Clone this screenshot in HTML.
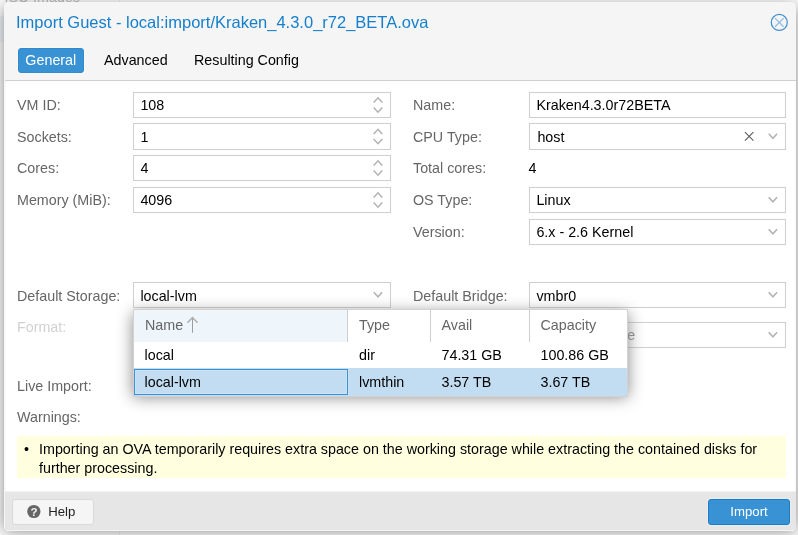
<!DOCTYPE html>
<html>
<head>
<meta charset="utf-8">
<title>Import Guest</title>
<style>
html,body{margin:0;padding:0;}
body{width:798px;height:535px;overflow:hidden;position:relative;background:#fbfbfb;font-family:"Liberation Sans",Arial,Helvetica,sans-serif;font-size:14.3px;color:#000;}
#root{position:absolute;left:0;top:0;width:798px;height:535px;overflow:hidden;will-change:transform;}
.abs{position:absolute;}
.bgtxt{left:4.5px;top:-11px;font-size:14.3px;line-height:16px;color:#b2b2b2;white-space:nowrap;}
.bgstripe{left:0;top:15.7px;width:119px;height:26px;background:#ecf2f8;}
.bgline{left:119px;top:0;width:1px;height:535px;background:#ececec;}
#winsh{left:4px;top:6.4px;width:792px;height:524.6px;border-radius:4.5px;box-shadow:0 0 15px #888;}
#win{left:4px;top:2px;width:792px;height:529px;background:#f5f5f5;border-radius:4.5px;}
#title{left:16px;top:12px;font-size:16.5px;line-height:20px;color:#157fcc;white-space:nowrap;}
.tab{top:48px;height:24.5px;line-height:25.5px;font-size:14.3px;white-space:nowrap;}
#tabGeneral{left:18px;width:66px;height:25px;line-height:23.5px;background:#3892d4;border:1px solid #2f8ad0;color:#fff;border-radius:3px;text-align:center;padding-right:0.4px;box-sizing:border-box;box-shadow:0 0 0 1px #fbf7f3;}
#tabline{left:5px;top:80px;width:791px;height:1px;background:#cfcfcf;}
#bodyp{left:5px;top:81px;width:791px;height:410px;background:#fff;border-left:1px solid #fafafa;border-right:1px solid #fafafa;box-sizing:border-box;}
#footer{left:5px;top:491px;width:791px;height:39px;background:#e6e6e6;border-top:1px solid #f2f2f2;box-sizing:border-box;}
.lbl{color:#666;font-size:14.3px;line-height:26px;height:26px;white-space:nowrap;}
.lbl.dis{color:#d1d1d1;}
.fld{box-sizing:border-box;border:1px solid #cfcfcf;background:#fff;}
.ft{font-size:14.3px;line-height:26px;height:26px;white-space:nowrap;color:#000;}
.btn{box-sizing:border-box;border-radius:3px;font-size:13.2px;white-space:nowrap;}
#help{left:12px;top:499px;width:82px;height:26px;background:#f5f5f5;border:1px solid #d9d9d9;color:#222;}
#import{left:708px;top:499px;width:82px;height:26px;background:#3892d4;border:1px solid #157fcc;color:#fff;text-align:center;line-height:24px;box-shadow:0 0 0 1px #f1ebe7;}
#warn{left:17px;top:436px;width:769px;height:42px;background:#ffffe0;}
#warn .t{position:absolute;left:22px;top:3.8px;font-size:14.3px;line-height:19px;white-space:nowrap;color:#000;}
#ddsh{left:133px;top:313.4px;width:495px;height:83.6px;box-shadow:0 0 15px #888;}
#dd{left:133px;top:309px;width:495px;height:88px;background:#fff;box-sizing:border-box;border:1px solid #d2d2d2;}
.hd{height:32px;line-height:32px;color:#666;font-size:14.3px;white-space:nowrap;}
.cell{height:27px;line-height:27px;font-size:14.3px;white-space:nowrap;}
svg{overflow:visible;}
</style>
</head>
<body>
<div id="root">
<div class="abs bgstripe"></div>
<div class="abs bgline"></div>
<div class="abs bgtxt">ISO Images</div>
<div class="abs" id="winsh"></div>
<div class="abs" id="win"></div>
<div class="abs" id="title">Import Guest - local:import/Kraken_4.3.0_r72_BETA.ova</div>
<svg class="abs" style="left:769px;top:12px;" width="20" height="20" viewBox="0 0 20 20"><circle cx="10.3" cy="10.45" r="8" fill="none" stroke="#4590cd" stroke-width="1.25"/><path d="M6 6.15 L14.6 14.75 M14.6 6.15 L6 14.75" stroke="#8fbbe6" stroke-width="1.25" fill="none"/></svg>
<div class="abs tab" id="tabGeneral">General</div>
<div class="abs tab" style="left:104px;">Advanced</div>
<div class="abs tab" style="left:194px;">Resulting Config</div>
<div class="abs" id="tabline"></div>
<div class="abs" id="bodyp"></div>
<div class="abs lbl " style="left:17px;top:92.0px;">VM ID:</div>
<div class="abs fld" style="left:133px;top:92px;width:258px;height:26px;"></div>
<div class="abs ft" style="left:140.4px;top:92.0px;">108</div>
<div class="abs lbl " style="left:17px;top:123.5px;">Sockets:</div>
<div class="abs fld" style="left:133px;top:123px;width:258px;height:27px;"></div>
<div class="abs ft" style="left:140.4px;top:123.5px;">1</div>
<div class="abs lbl " style="left:17px;top:155.0px;">Cores:</div>
<div class="abs fld" style="left:133px;top:155px;width:258px;height:26px;"></div>
<div class="abs ft" style="left:140.4px;top:155.0px;">4</div>
<div class="abs lbl " style="left:17px;top:187.0px;">Memory (MiB):</div>
<div class="abs fld" style="left:133px;top:187px;width:258px;height:26px;"></div>
<div class="abs ft" style="left:140.4px;top:187.0px;">4096</div>
<div class="abs lbl " style="left:413px;top:92.0px;">Name:</div>
<div class="abs fld" style="left:529px;top:92px;width:257px;height:26px;"></div>
<div class="abs ft" style="left:536.4px;top:92.0px;">Kraken4.3.0r72BETA</div>
<div class="abs lbl " style="left:413px;top:123.5px;">CPU Type:</div>
<div class="abs fld" style="left:529px;top:123px;width:257px;height:27px;"></div>
<div class="abs ft" style="left:537.4px;top:123.5px;">host</div>
<div class="abs lbl " style="left:413px;top:155.0px;">Total cores:</div>
<div class="abs ft" style="left:528.5px;top:155px;">4</div>
<div class="abs lbl " style="left:413px;top:187.0px;">OS Type:</div>
<div class="abs fld" style="left:529px;top:187px;width:257px;height:26px;"></div>
<div class="abs ft" style="left:536.4px;top:187.0px;">Linux</div>
<div class="abs lbl " style="left:413px;top:219.0px;">Version:</div>
<div class="abs fld" style="left:529px;top:219px;width:257px;height:26px;"></div>
<div class="abs ft" style="left:536.4px;top:219.0px;">6.x - 2.6 Kernel</div>
<div class="abs lbl " style="left:17px;top:283.0px;">Default Storage:</div>
<div class="abs fld" style="left:133px;top:282px;width:258px;height:26px;"></div>
<div class="abs ft" style="left:140.4px;top:283.0px;">local-lvm</div>
<div class="abs lbl " style="left:413px;top:283.0px;">Default Bridge:</div>
<div class="abs fld" style="left:529px;top:282px;width:257px;height:26px;"></div>
<div class="abs ft" style="left:536.4px;top:283.0px;">vmbr0</div>
<div class="abs lbl dis" style="left:17px;top:314px;">Format:</div>
<div class="abs fld" style="left:133px;top:314px;width:258px;height:26px;"></div>
<div class="abs ft" style="left:140.4px;top:314.0px;color:#b3b3b3;">Raw disk image (raw)</div>
<div class="abs lbl " style="left:413px;top:322.0px;">Import Working Storage:</div>
<div class="abs fld" style="left:529px;top:322px;width:257px;height:26px;"></div>
<div class="abs ft" style="left:535.9px;top:322.0px;color:#8a8a8a;">Source Storage</div>
<div class="abs lbl" style="left:17px;top:373px;">Live Import:</div>
<div class="abs lbl" style="left:17px;top:404px;">Warnings:</div>
<div class="abs" id="warn">
<div class="abs" style="left:7px;top:3.8px;font-size:14.3px;line-height:19px;">&bull;</div>
<div class="t">Importing an OVA temporarily requires extra space on the working storage while extracting the contained disks for<br>further processing.</div>
</div>
<svg class="abs" style="left:0;top:0;" width="798" height="535" viewBox="0 0 798 535" fill="none" stroke="#b2b2b2" stroke-width="1.5">
<path d="M373.7 102.4 L378.0 97.8 L382.3 102.4"/><path d="M373.7 107.5 L378.0 112.2 L382.3 107.5"/>
<path d="M373.7 133.9 L378.0 129.3 L382.3 133.9"/><path d="M373.7 139.0 L378.0 143.7 L382.3 139.0"/>
<path d="M373.7 165.4 L378.0 160.8 L382.3 165.4"/><path d="M373.7 170.5 L378.0 175.2 L382.3 170.5"/>
<path d="M373.7 197.4 L378.0 192.8 L382.3 197.4"/><path d="M373.7 202.5 L378.0 207.2 L382.3 202.5"/>
<path d="M768.6999999999999 133.8 L772.9 138.3 L777.1 133.8"/>
<path d="M768.6999999999999 197.3 L772.9 201.8 L777.1 197.3"/>
<path d="M768.6999999999999 229.3 L772.9 233.8 L777.1 229.3"/>
<path d="M768.6999999999999 292.3 L772.9 296.8 L777.1 292.3"/>
<path d="M768.6999999999999 332.3 L772.9 336.8 L777.1 332.3"/>
<path d="M373.8 292.3 L378.0 296.8 L382.2 292.3"/>
<path d="M744.9 132.2 L753.4 140.6 M753.4 132.2 L744.9 140.6" stroke="#5c5c5c" stroke-width="1.1"/>
</svg>
<div class="abs" id="ddsh"></div>
<div class="abs" id="dd"></div>
<div class="abs" style="left:134px;top:310px;width:213px;height:32px;background:#eef5fb;"></div>
<div class="abs" style="left:347px;top:310px;width:1px;height:32px;background:#cfcfcf;"></div>
<div class="abs" style="left:430px;top:310px;width:1px;height:32px;background:#cfcfcf;"></div>
<div class="abs" style="left:529px;top:310px;width:1px;height:32px;background:#cfcfcf;"></div>
<div class="abs" style="left:134px;top:368px;width:493px;height:28px;background:#c2ddf2;"></div>
<div class="abs" style="left:134px;top:369px;width:214px;height:26px;border:1px solid #3892d4;box-sizing:border-box;box-shadow:inset 0 0 0 1px #cde3f5, 1px 0 0 0 #cde3f5;"></div>
<div class="abs hd" style="left:145px;top:309.3px;">Name</div>
<div class="abs hd" style="left:359px;top:309.3px;">Type</div>
<div class="abs hd" style="left:441.5px;top:309.3px;">Avail</div>
<div class="abs hd" style="left:540.5px;top:309.3px;">Capacity</div>
<svg class="abs" style="left:185px;top:316px;" width="14" height="18" viewBox="0 0 14 18" fill="none" stroke="#9c9c9c" stroke-width="1"><path d="M7.5 1.4 L7.5 16.8"/><path d="M2.4 6.8 L7.5 1.5 L12.6 6.8" stroke="#adadad" stroke-width="1.4"/></svg>
<div class="abs cell" style="left:144.5px;top:342px;">local</div>
<div class="abs cell" style="left:359px;top:342px;">dir</div>
<div class="abs cell" style="left:441.5px;top:342px;">74.31 GB</div>
<div class="abs cell" style="left:540.5px;top:342px;">100.86 GB</div>
<div class="abs cell" style="left:144.5px;top:368.8px;">local-lvm</div>
<div class="abs cell" style="left:359px;top:368.8px;">lvmthin</div>
<div class="abs cell" style="left:441.5px;top:368.8px;">3.57 TB</div>
<div class="abs cell" style="left:540.5px;top:368.8px;">3.67 TB</div>
<div class="abs" id="footer"></div>
<div class="abs btn" id="help"><svg class="abs" style="left:13px;top:4px;" width="15" height="15" viewBox="0 0 15 15"><circle cx="7.85" cy="7.5" r="6.6" fill="#666"/><text x="7.9" y="11.5" text-anchor="middle" font-family="Liberation Sans, sans-serif" font-weight="bold" font-size="11.5" fill="#f5f5f5">?</text></svg><span class="abs" style="left:35.2px;top:0;line-height:23px;">Help</span></div>
<div class="abs btn" id="import">Import</div>
</div>
</body>
</html>
